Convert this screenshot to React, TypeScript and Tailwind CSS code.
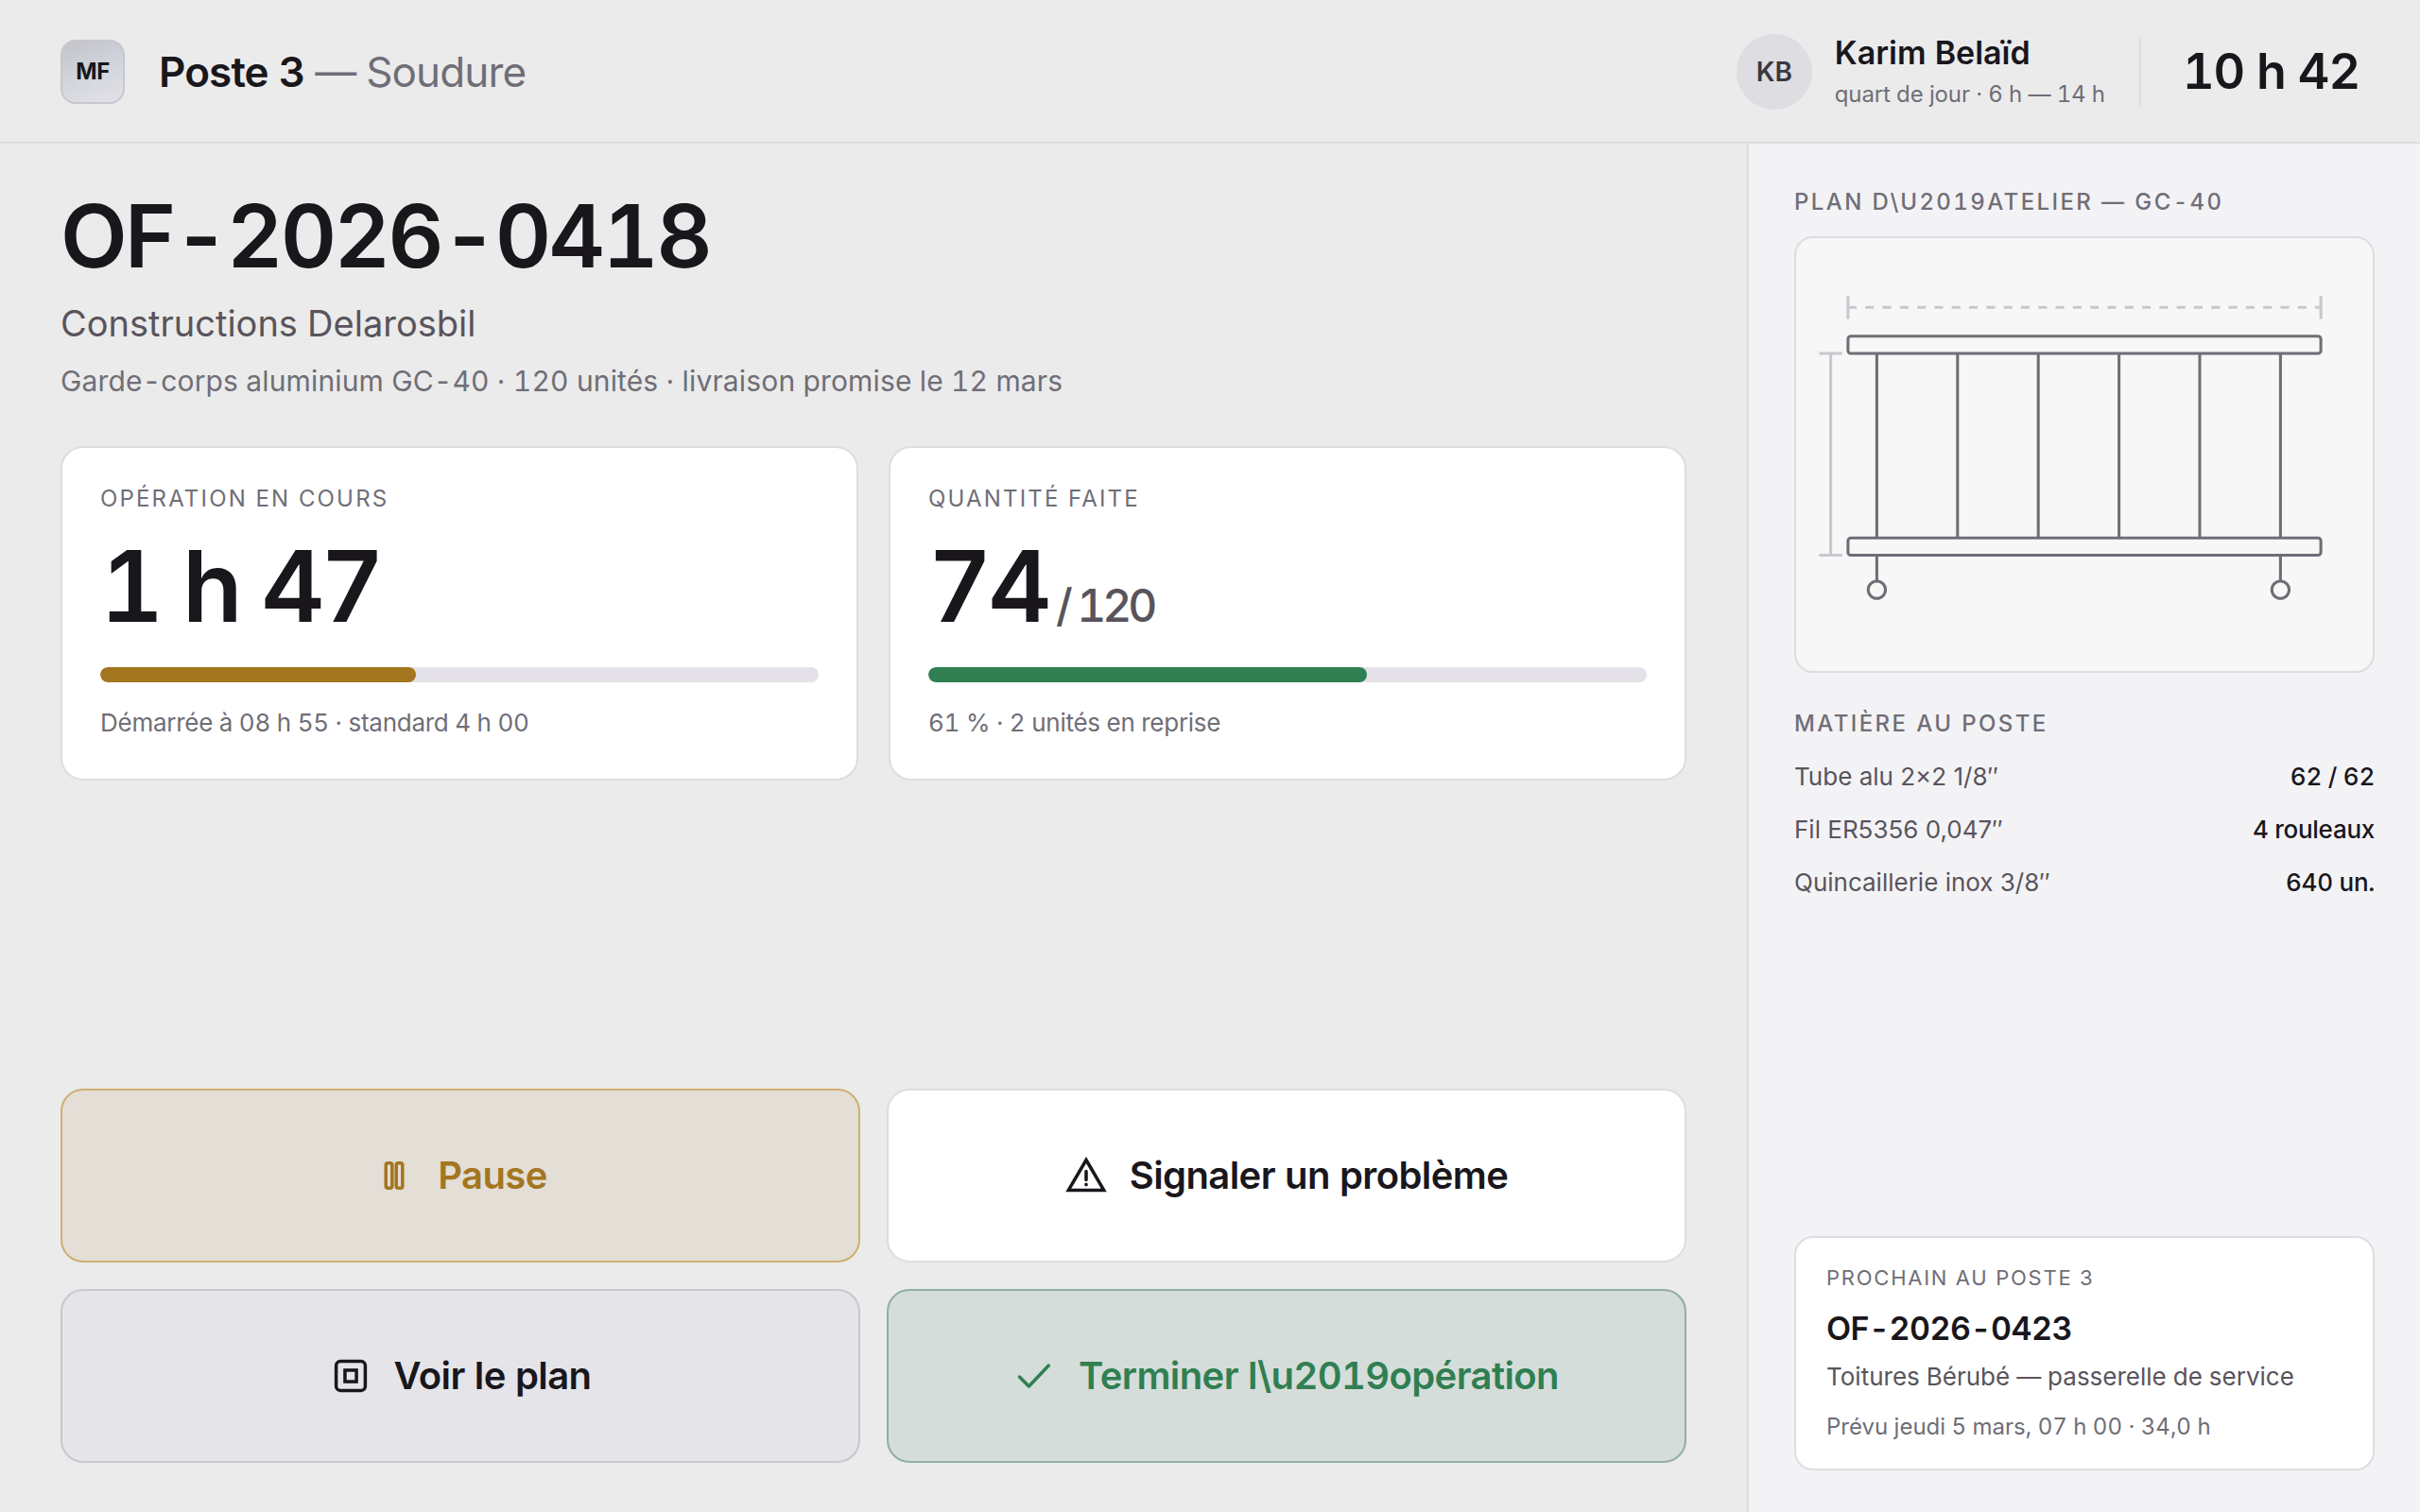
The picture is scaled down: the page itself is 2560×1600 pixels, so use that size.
import type { ReactNode } from "react";
import { clsx } from "clsx";

type Stat = {
  label: string;
  value: string;
  total?: string;
  percent: number;
  note: string;
  tone: "amber" | "green";
};

const stats: Stat[] = [
  {
    label: "Opération en cours",
    value: "1 h 47",
    percent: 44,
    note: "Démarrée à 08 h 55 · standard 4 h 00",
    tone: "amber",
  },
  {
    label: "Quantité faite",
    value: "74",
    total: " / 120",
    percent: 61,
    note: "61 % · 2 unités en reprise",
    tone: "green",
  },
];

const materials = [
  { name: "Tube alu 2×2 1/8″", qty: "62 / 62" },
  { name: "Fil ER5356 0,047″", qty: "4 rouleaux" },
  { name: "Quincaillerie inox 3/8″", qty: "640 un." },
];

function Icon({ children }: { children: ReactNode }) {
  return (
    <svg
      viewBox="0 0 20 20"
      className="size-11 shrink-0"
      fill="none"
      stroke="currentColor"
      strokeWidth={1.6}
      strokeLinecap="round"
      aria-hidden="true"
    >
      {children}
    </svg>
  );
}

function ActionButton(props: { className: string; icon: ReactNode; label: string }) {
  return (
    <button
      type="button"
      className={clsx(
        "flex h-46 items-center justify-center gap-6 rounded-3xl border-2 text-[40px] font-semibold tracking-[-0.015em]",
        props.className
      )}
    >
      <Icon>{props.icon}</Icon>
      {props.label}
    </button>
  );
}

function StatCard({ stat }: { stat: Stat }) {
  return (
    <section className="rounded-3xl border-2 border-[#dddde2] bg-white px-10 pt-9 pb-10">
      <h2 className="text-2xl leading-9 tracking-[0.09em] text-[#6f6e77] uppercase">{stat.label}</h2>
      <p className="mt-[22px] text-[104px] leading-none font-semibold tracking-[-0.04em]">
        {stat.value}
        {stat.total && <span className="text-5xl font-medium text-[#59545c]">{stat.total}</span>}
      </p>
      <div className="mt-[34px] h-4 overflow-hidden rounded-full bg-[#e4e2e8]">
        <div
          className={clsx("h-full rounded-full", stat.tone === "amber" ? "bg-[#a3761f]" : "bg-[#307f52]")}
          style={{ width: `${stat.percent}%` }}
        />
      </div>
      <p className="mt-6 text-[26px] leading-[38px] tracking-[-0.01em] text-[#6f6e77]">{stat.note}</p>
    </section>
  );
}

function RailingPlan() {
  const posts = [28, 56, 84, 112, 140, 168];
  return (
    <svg viewBox="0 0 200 150" className="block w-full" fill="none" role="img" aria-label="Garde-corps GC-40">
      <g stroke="#c8c7ce" strokeWidth="1">
        <path d="M18 24H182" strokeDasharray="3 3" />
        <path d="M18 20V28M182 20V28" />
        <path d="M12 40V110M8 40H16M8 110H16" />
      </g>
      <g stroke="#6f6e77" strokeWidth="1">
        <rect x="18" y="34" width="164" height="6" rx="1" />
        <rect x="18" y="104" width="164" height="6" rx="1" />
        {posts.map((x) => (
          <path key={x} d={`M${x} 40V104`} />
        ))}
        <path d="M28 110V119M168 110V119" />
        <circle cx="28" cy="122" r="3" />
        <circle cx="168" cy="122" r="3" />
      </g>
    </svg>
  );
}

export default function App() {
  return (
    <div className="flex min-h-screen flex-col bg-[#ebebeb] font-[Inter,sans-serif] text-[#19171c] tabular-nums">
      <header className="flex items-center border-b-2 border-[#dddde2] px-16 pt-9 pb-[34px]">
        <div className="flex size-17 items-center justify-center rounded-2xl border-2 border-[#c8c7ce] bg-linear-160 from-[#c4c3ca] via-[#d0d5dc] to-[#e4e2e8] text-2xl font-bold tracking-[-0.02em]">
          MF
        </div>
        <h1 className="ml-9 text-[44px] leading-none font-semibold tracking-[-0.02em]">
          Poste 3 <span className="font-normal text-[#6f6e77]">— Soudure</span>
        </h1>
        <div className="ml-auto flex size-20 items-center justify-center rounded-full bg-[#dddde2] text-[28px] font-semibold text-[#3a383f]">
          KB
        </div>
        <div className="ml-6">
          <p className="text-[34px] leading-10 font-semibold">Karim Belaïd</p>
          <p className="mt-2 text-2xl leading-8 tracking-[-0.005em] text-[#6f6e77]">quart de jour · 6 h — 14 h</p>
        </div>
        <time className="ml-9 border-l-2 border-[#dddde2] pl-11 text-[52px] leading-[74px] font-semibold tracking-[-0.02em]">
          10 h 42
        </time>
      </header>

      <div className="flex flex-1">
        <main className="flex flex-1 flex-col px-16 py-13">
          <h2 className="text-[92px] leading-none font-semibold tracking-[-0.03em]">OF-2026-0418</h2>
          <p className="mt-[22px] text-[38px] leading-12 text-[#59545c]">Constructions Delarosbil</p>
          <p className="mt-4 text-[30px] leading-[42px] tracking-[0.005em] text-[#6f6e77]">
            Garde-corps aluminium GC-40 · 120 unités · livraison promise le 12 mars
          </p>

          <div className="mt-12 grid grid-cols-2 gap-8">
            {stats.map((stat) => (
              <StatCard key={stat.label} stat={stat} />
            ))}
          </div>

          <div className="mt-auto grid grid-cols-2 gap-7">
            <ActionButton
              className="border-[#cfae74] bg-[#e3ded6] text-[#a3761f]"
              label="Pause"
              icon={
                <>
                  <rect x="6" y="4" width="3" height="12" rx="1" />
                  <rect x="11" y="4" width="3" height="12" rx="1" />
                </>
              }
            />
            <ActionButton
              className="border-[#dddde2] bg-white"
              label="Signaler un problème"
              icon={<path d="M10 2.5L18.5 17H1.5ZM10 8V12M10 14.2V14.4" />}
            />
            <ActionButton
              className="border-[#c8c7ce] bg-[#e5e4e9]"
              label="Voir le plan"
              icon={
                <>
                  <rect x="3" y="3" width="14" height="14" rx="2" />
                  <rect x="7.25" y="7.25" width="5.5" height="5.5" />
                </>
              }
            />
            <ActionButton
              className="border-[#91aea0] bg-[#d5ddda] text-[#307f52]"
              label={"Terminer l\\u2019opération"}
              icon={<path d="M2.5 10.5L7 15L16.5 5" strokeLinejoin="round" />}
            />
          </div>
        </main>

        <aside className="flex w-[712px] flex-col border-l-2 border-[#dddde2] bg-[#f3f3f6] px-12 py-11">
          <h2 className="text-2xl leading-9 font-medium tracking-[0.1em] text-[#6f6e77] uppercase">
            {"Plan d\\u2019atelier — GC-40"}
          </h2>
          <div className="mt-[18px] rounded-[20px] border-2 border-[#dddde2] bg-[#f7f7f7]">
            <RailingPlan />
          </div>

          <h2 className="mt-9 text-2xl leading-9 font-medium tracking-[0.1em] text-[#6f6e77] uppercase">
            Matière au poste
          </h2>
          <dl className="mt-[10px] text-[26px]">
            {materials.map((m) => (
              <div key={m.name} className="flex justify-between leading-14">
                <dt className="text-[#59545c] normal-nums">{m.name}</dt>
                <dd className="font-medium tracking-[-0.01em]">{m.qty}</dd>
              </div>
            ))}
          </dl>

          <section className="mt-auto rounded-[20px] border-2 border-[#dddde2] bg-white px-8 pt-6 pb-[26px]">
            <h2 className="text-[22px] leading-9 tracking-[0.08em] text-[#6f6e77] uppercase">Prochain au poste 3</h2>
            <p className="mt-3 text-[34px] leading-12 font-semibold tracking-[-0.015em]">OF-2026-0423</p>
            <p className="mt-2 text-[26px] leading-[38px] text-[#59545c]">Toitures Bérubé — passerelle de service</p>
            <p className="mt-4 text-2xl leading-9 text-[#6f6e77]">Prévu jeudi 5 mars, 07 h 00 · 34,0 h</p>
          </section>
        </aside>
      </div>
    </div>
  );
}
